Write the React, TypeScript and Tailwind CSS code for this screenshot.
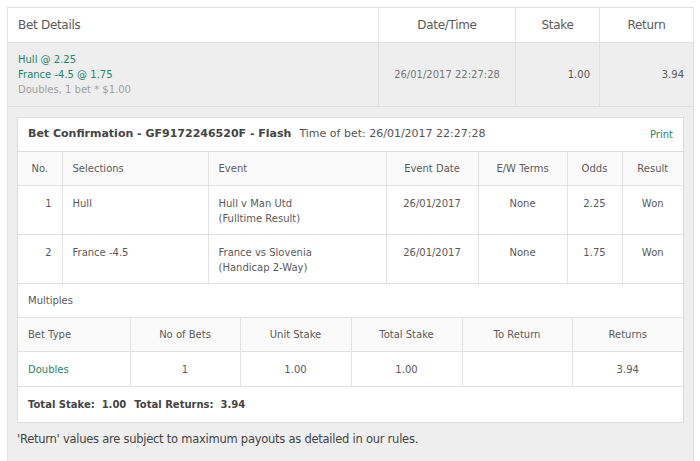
import React from 'react';

const green = 'text-[#1b8767]';

export default function App() {
  return (
    <div className="bg-white w-[700px] h-[461px] overflow-hidden p-[7px] pr-[6px] font-['DejaVu_Sans',sans-serif] text-[#5a5a5a]">
      <table className="w-[687px] table-fixed border-collapse border border-[#e0e0e0]">
        <colgroup>
          <col className="w-[371px]" />
          <col className="w-[137px]" />
          <col className="w-[84px]" />
          <col />
        </colgroup>
        <thead>
          <tr className="h-[35px] text-[12px] tracking-[-0.3px]">
            <th className="border border-[#e0e0e0] text-left font-normal pl-[10px]">Bet Details</th>
            <th className="border border-[#e0e0e0] font-normal">Date/Time</th>
            <th className="border border-[#e0e0e0] font-normal">Stake</th>
            <th className="border border-[#e0e0e0] font-normal">Return</th>
          </tr>
        </thead>
        <tbody>
          {/* summary row */}
          <tr className="h-[64px] bg-[#eeeeee] text-[10px]">
            <td className="border border-[#e0e0e0] pl-[10px] leading-[15px]">
              <div className={green}>Hull @ 2.25</div>
              <div className={green}>France -4.5 @ 1.75</div>
              <div className="text-[#a0a0a0]">Doubles, 1 bet * $1.00</div>
            </td>
            <td className="border border-[#e0e0e0] text-center text-[#777]">26/01/2017 22:27:28</td>
            <td className="border border-[#e0e0e0] text-right pr-[9px]">1.00</td>
            <td className="border border-[#e0e0e0] text-right pr-[9px]">3.94</td>
          </tr>
          {/* expanded details */}
          <tr className="bg-[#eeeeee]">
            <td colSpan={4} className="border border-[#e0e0e0] pt-[10px] pl-[9px] pr-[9px] pb-[10px]">
              <div className="bg-white border border-[#dddddd] text-[10px]">
                <div className="h-[34px] flex items-center px-[10px] border-b border-[#dddddd]">
                  <span className="font-bold text-[11px] text-[#444]">Bet Confirmation - GF9172246520F - Flash</span>
                  <span className="ml-[8px] text-[11px] text-[#555]">Time of bet: 26/01/2017 22:27:28</span>
                  <span className={`ml-auto text-[10px] ${green}`}>Print</span>
                </div>
                <table className="w-full table-fixed border-collapse">
                  <colgroup>
                    <col className="w-[44px]" />
                    <col className="w-[146px]" />
                    <col className="w-[178px]" />
                    <col className="w-[92px]" />
                    <col className="w-[89px]" />
                    <col className="w-[55px]" />
                    <col />
                  </colgroup>
                  <thead>
                    <tr className="h-[33px] bg-[#fafafa]">
                      <th className="border-r border-b border-[#e2e2e2] font-normal text-center">No.</th>
                      <th className="border-r border-b border-[#e2e2e2] font-normal text-left pl-[10px]">Selections</th>
                      <th className="border-r border-b border-[#e2e2e2] font-normal text-left pl-[10px]">Event</th>
                      <th className="border-r border-b border-[#e2e2e2] font-normal text-center">Event Date</th>
                      <th className="border-r border-b border-[#e2e2e2] font-normal text-center">E/W Terms</th>
                      <th className="border-r border-b border-[#e2e2e2] font-normal text-center">Odds</th>
                      <th className="border-b border-[#e2e2e2] font-normal text-center">Result</th>
                    </tr>
                  </thead>
                  <tbody>
                    {[
                      ['1', 'Hull', 'Hull v Man Utd', '(Fulltime Result)', '2.25'],
                      ['2', 'France -4.5', 'France vs Slovenia', '(Handicap 2-Way)', '1.75'],
                    ].map(([n, sel, ev, mk, odds]) => (
                      <tr key={n} className="h-[49px] align-top leading-[15px]">
                        <td className="border-r border-b border-[#e2e2e2] text-right pr-[10px] pt-[10px]">{n}</td>
                        <td className="border-r border-b border-[#e2e2e2] pl-[10px] pt-[10px]">{sel}</td>
                        <td className="border-r border-b border-[#e2e2e2] pl-[10px] pt-[10px]">
                          <div>{ev}</div>
                          <div>{mk}</div>
                        </td>
                        <td className="border-r border-b border-[#e2e2e2] text-center pt-[10px]">26/01/2017</td>
                        <td className="border-r border-b border-[#e2e2e2] text-center pt-[10px]">None</td>
                        <td className="border-r border-b border-[#e2e2e2] text-center pt-[10px]">{odds}</td>
                        <td className="border-b border-[#e2e2e2] text-center pt-[10px]">Won</td>
                      </tr>
                    ))}
                  </tbody>
                </table>
                <div className="h-[34px] flex items-center pl-[10px] border-b border-[#e2e2e2]">Multiples</div>
                <table className="w-full table-fixed border-collapse">
                  <colgroup>
                    <col className="w-[112px]" />
                    <col className="w-[110px]" />
                    <col className="w-[111px]" />
                    <col className="w-[111px]" />
                    <col className="w-[110px]" />
                    <col />
                  </colgroup>
                  <tbody>
                    <tr className="h-[34px] bg-[#fafafa]">
                      <td className="border-r border-b border-[#e2e2e2] pl-[10px]">Bet Type</td>
                      <td className="border-r border-b border-[#e2e2e2] text-center">No of Bets</td>
                      <td className="border-r border-b border-[#e2e2e2] text-center">Unit Stake</td>
                      <td className="border-r border-b border-[#e2e2e2] text-center">Total Stake</td>
                      <td className="border-r border-b border-[#e2e2e2] text-center">To Return</td>
                      <td className="border-b border-[#e2e2e2] text-center">Returns</td>
                    </tr>
                    <tr className="h-[35px]">
                      <td className={`border-r border-b border-[#e2e2e2] pl-[10px] ${green}`}>Doubles</td>
                      <td className="border-r border-b border-[#e2e2e2] text-center">1</td>
                      <td className="border-r border-b border-[#e2e2e2] text-center">1.00</td>
                      <td className="border-r border-b border-[#e2e2e2] text-center">1.00</td>
                      <td className="border-r border-b border-[#e2e2e2] text-center"></td>
                      <td className="border-b border-[#e2e2e2] text-center">3.94</td>
                    </tr>
                  </tbody>
                </table>
                <div className="h-[35px] flex items-center pl-[10px] font-bold text-[#444] gap-[8px]">
                  <span>Total Stake:&nbsp; 1.00</span>
                  <span>Total Returns:&nbsp; 3.94</span>
                </div>
              </div>
              <div className="pt-[8px] pb-[3px] text-[11.5px] text-[#444] tracking-[-0.25px]">
                'Return' values are subject to maximum payouts as detailed in our rules.
              </div>
            </td>
          </tr>
          <tr className="h-[30px]">
            <td className="border border-[#e0e0e0]"></td>
            <td className="border border-[#e0e0e0]"></td>
            <td className="border border-[#e0e0e0]"></td>
            <td className="border border-[#e0e0e0]"></td>
          </tr>
        </tbody>
      </table>
    </div>
  );
}
